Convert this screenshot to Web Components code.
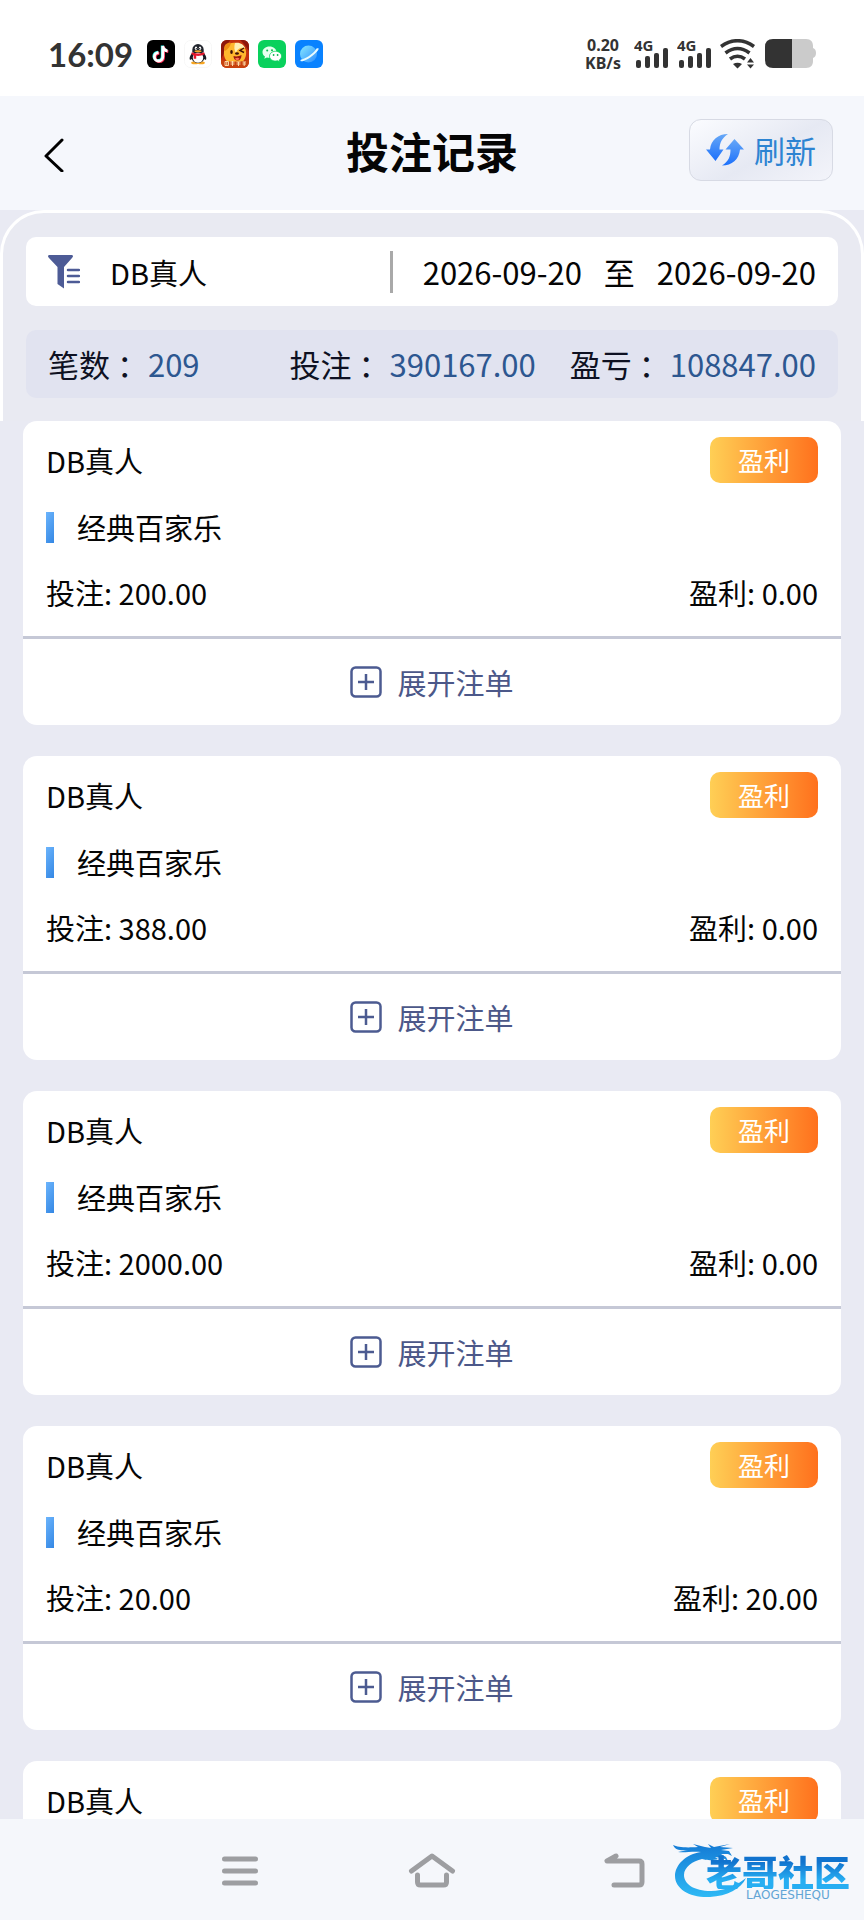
<!DOCTYPE html>
<html lang="zh-CN">
<head>
<meta charset="utf-8">
<meta name="viewport" content="width=device-width, initial-scale=1">
<title>投注记录</title>
<style>
html, body {
  height: 100%;
}
body {
  margin: 0;
  background: #e9eaf3;
  color: #050505;
  font-family: "Noto Sans CJK SC", sans-serif;
  font-size: 29px;
  line-height: 42px;
}
</style>
</head>
<body>

<record-page>
  <status-bar slot="status" time="16:09" speed="0.20"></status-bar>
  <page-header slot="header">投注记录<span slot="action">刷新</span></page-header>
  <filter-panel slot="filter" from="2026-09-20" to="2026-09-20">
    DB真人
    <summary-item slot="summary" label="笔数" class="first">209</summary-item>
    <summary-item slot="summary" label="投注">390167.00</summary-item>
    <summary-item slot="summary" label="盈亏">108847.00</summary-item>
  </filter-panel>
  <bet-card game="经典百家乐" stake="200.00" profit="0.00">DB真人</bet-card>
  <bet-card game="经典百家乐" stake="388.00" profit="0.00">DB真人</bet-card>
  <bet-card game="经典百家乐" stake="2000.00" profit="0.00">DB真人</bet-card>
  <bet-card game="经典百家乐" stake="20.00" profit="20.00">DB真人</bet-card>
  <bet-card>DB真人</bet-card>
  <nav-bar slot="nav"><site-mark></site-mark></nav-bar>
</record-page>

<script>
// shared by every element: box model and a reset for the native buttons
const BASE = `
  :host, * { box-sizing: border-box; }
  svg { display: block; flex: none; }
  button {
    margin: 0;
    padding: 0;
    border: 0;
    background: none;
    color: inherit;
    font: inherit;
    cursor: pointer;
  }
`;

class BaseElement extends HTMLElement {
  constructor() {
    super();
    this._root = this.attachShadow({mode: 'open'});
  }

  connectedCallback() {
    this._root.innerHTML = `<style>${BASE}${this.styles()}</style>${this.markup()}`;
  }
}

class RecordPage extends BaseElement {
  styles() {
    return `
      :host { display: flex; flex-direction: column; height: 100vh; }
      main {
        flex: 1;
        min-height: 0;
        overflow-y: auto;
        scrollbar-width: none;
      }
      .list { display: grid; gap: 31px; padding: 0 23px; }
    `;
  }

  markup() {
    return `
      <slot name="status"></slot>
      <slot name="header"></slot>
      <slot name="filter"></slot>
      <main><div class="list"><slot></slot></div></main>
      <slot name="nav"></slot>
    `;
  }
}

class StatusBar extends BaseElement {
  styles() {
    return `
      :host {
        display: flex;
        flex: none;
        align-items: center;
        justify-content: space-between;
        height: 96px;
        padding: 12px 48px 0;
        background: #fff;
        color: #333;
      }
      .side { display: flex; align-items: center; gap: 9px; }
      .time {
        margin-right: 5px;
        font: bold 33px/40px Lato, sans-serif;
      }
      .speed {
        margin-right: 4px;
        font: bold 16px/18px "Noto Sans", sans-serif;
        text-align: center;
      }
      .speed span { display: block; }
      .signal { margin-top: -6px; }
      .signal text { font: bold 15px "Noto Sans", sans-serif; }
    `;
  }

  signal() {
    return `
      <svg class="signal" width="34" height="36" viewBox="0 -6 34 36" fill="#333">
        <text x="0" y="12">4G</text>
        <rect x="2" y="21" width="5" height="8" rx="2"/>
        <rect x="11" y="17" width="5" height="12" rx="2"/>
        <rect x="20" y="14" width="5" height="15" rx="2"/>
        <rect x="29" y="9" width="5" height="20" rx="2"/>
      </svg>
    `;
  }

  markup() {
    return `
      <div class="side">
        <span class="time">${this.getAttribute('time')}</span>
        <svg width="28" height="28" viewBox="0 0 28 28" fill="none" stroke-width="2.8">
          <rect width="28" height="28" rx="6" fill="#000"/>
          <path d="M15.8 6v10.8a4.2 4.2 0 1 1-4.2-4.2M15.8 6c.3 3 2 4.6 4.7 4.9" stroke="#2af0ea" transform="translate(-.6 -.5)"/>
          <path d="M15.8 6v10.8a4.2 4.2 0 1 1-4.2-4.2M15.8 6c.3 3 2 4.6 4.7 4.9" stroke="#fe2c55" transform="translate(.8 .7)"/>
          <path d="M15.8 6v10.8a4.2 4.2 0 1 1-4.2-4.2M15.8 6c.3 3 2 4.6 4.7 4.9" stroke="#fff"/>
        </svg>
        <svg width="28" height="28" viewBox="0 0 28 28">
          <rect x=".5" y=".5" width="27" height="27" rx="6" fill="#fff" stroke="#f7f7f7"/>
          <ellipse cx="10.800" cy="22.800" rx="3.600" ry="1.500" fill="#f7a623"/>
          <ellipse cx="17.200" cy="22.800" rx="3.600" ry="1.500" fill="#f7a623"/>
          <path d="M8.500 12.500C5.500 16 5.300 18.500 6 19.800c.8.300 1.600-.9 1.600-.9h12.800s.8 1.200 1.600.9c.7-1.300.5-3.800-2.500-7.300z" fill="#191b22"/>
          <ellipse cx="14" cy="17" rx="6.800" ry="6" fill="#191b22"/>
          <ellipse cx="14" cy="17.800" rx="5.200" ry="5" fill="#fff"/>
          <path d="M8.300 12V9.800a5.700 5.700 0 0 1 11.400 0V12z" fill="#20242c"/>
          <ellipse cx="12" cy="8.300" rx="1.200" ry="1.700" fill="#fff"/>
          <ellipse cx="16" cy="8.300" rx="1.200" ry="1.700" fill="#fff"/>
          <circle cx="12.300" cy="8.600" r=".6"/><circle cx="15.700" cy="8.600" r=".6"/>
          <ellipse cx="14" cy="11.300" rx="3.500" ry="1" fill="#f7a623"/>
          <path d="M7.800 12.300c4 1.700 8.400 1.700 12.400 0l.5 2c-3 1.500-6 1.800-8.500 1.500v3H9.700v-3.600l-2.300-.9z" fill="#e6172b"/>
        </svg>
        <svg width="28" height="28" viewBox="0 0 28 28">
          <clipPath id="dog"><rect width="28" height="28" rx="6"/></clipPath>
          <g clip-path="url(#dog)">
            <path d="M0 0h28v28H0z" fill="#c4310f"/>
            <path d="M0 0h9L4 11l-4 8zM19 0h9v11l-5-7z" fill="#8d160c"/>
            <path d="M3 15C2 6 8 2 15 3s11 5 10 12c-1 6-5 9-11 9S4 21 3 15z" fill="#ffb72e"/>
            <path d="M14 3c5-1 9 2 10 5-5-1-8 1-9 5-2-3-2-6-1-10z" fill="#fff0b5"/>
            <path d="M3 9c0-5 4-7 7-6-1 4-3 6-6 8z" fill="#ed8b13"/>
            <ellipse cx="10.500" cy="12" rx="1.300" ry="1.900" fill="#401208"/>
            <path d="M23 8l-4 2.500 4 2" fill="none" stroke="#401208" stroke-width="1.400"/>
            <ellipse cx="16" cy="13.500" rx="1.900" ry="1.200" fill="#401208"/>
            <path d="M12.500 16c3 1 6 0 8-1 0 3.500-1.500 5.500-4 5.500s-4-2-4-4.500z" fill="#9b180c"/>
            <path d="M14 18.500c2-1 3.500-1 4.500.2-1 1.800-3.700 2-4.500-.2z" fill="#ff6d55"/>
            <path d="M0 20c9 2 19 2 28 0v8H0z" fill="#c8430f"/>
            <path d="M4 21.500h3.500v4H4zm1.800 0v4M9.500 22h4M11.500 21v5m-2-2h4M15.500 22h4m-2 0v4m-2-2h4M21.500 22h3.500m-3.500 2h3.500m-1.800-2v4" fill="none" stroke="#ffe4b4" stroke-width=".9"/>
          </g>
        </svg>
        <svg width="28" height="28" viewBox="0 0 28 28">
          <rect width="28" height="28" rx="6" fill="#09d15c"/>
          <path d="M11.500 6.500c-4 0-7 2.500-7 5.700 0 1.800 1 3.300 2.500 4.300l-.7 2.200 2.600-1.300c.8.200 1.700.3 2.600.3 4 0 7-2.400 7-5.500s-3-5.700-7-5.700z" fill="#e6ffee"/>
          <path d="M17.500 11.300c-3.300 0-6 2.200-6 4.900s2.700 4.800 6 4.800c.8 0 1.500-.1 2.200-.3l2.200 1.100-.6-1.900c1.400-.9 2.300-2.200 2.300-3.700 0-2.700-2.800-4.900-6.100-4.900z" fill="#fff" stroke="#09d15c" stroke-width=".8"/>
          <g fill="#09b84f"><circle cx="9.200" cy="10.500" r="1"/><circle cx="14" cy="10.300" r="1"/><circle cx="15.600" cy="15" r=".9"/><circle cx="19.600" cy="15" r=".9"/></g>
        </svg>
        <svg width="28" height="28" viewBox="0 0 28 28">
          <linearGradient id="sea" x2="1" y2="1"><stop stop-color="#88e8ff"/><stop offset="1" stop-color="#2b8cff"/></linearGradient>
          <rect width="28" height="28" rx="6" fill="#0982ff"/>
          <circle cx="13.500" cy="14" r="8.500" fill="url(#sea)"/>
          <path d="M21.500 8.500c2-.8 2.700-.3 1.700 1.400-2.500 3.700-9 8.700-13.700 10.600-3.500 1.500-5 .9-3.500-1 2.500.3 12-5 15.500-11z" fill="#e9fbff"/>
        </svg>
      </div>
      <div class="side">
        <span class="speed"><span>${this.getAttribute('speed')}</span><span>KB/s</span></span>
        ${this.signal()}
        ${this.signal()}
        <svg width="36" height="30" viewBox="0 0 36 30" fill="none" stroke="#333" stroke-width="3.600">
          <path d="M1 7.500Q17.500-4 34 7.500M5.500 14Q17.500 5 29.500 14M10 20Q17.500 14.500 25 20"/>
          <path d="M13 25q4.500-2.500 9 0l-4.500 4.500zM27 23.500l3.500-4.500 3.500 4.500zM27 25.500h7L30.500 29.500z" fill="#333" stroke="none"/>
        </svg>
        <svg width="51" height="30" viewBox="0 0 51 30">
          <path d="M26 0h15c5 0 7 3 7 7v2q3 1 3 5t-3 5v3c0 4-2 7-7 7H26z" fill="#cbcbcb"/>
          <path d="M27 0H8Q0 0 0 8v13q0 8 8 8h19z" fill="#333"/>
        </svg>
      </div>
    `;
  }
}

class PageHeader extends BaseElement {
  styles() {
    return `
      :host {
        display: grid;
        flex: none;
        grid-template-columns: 1fr auto 1fr;
        align-items: center;
        height: 114px;
        padding: 0 31px 6px;
        background: #f5f7fc;
      }
      h1 { margin: 0; font-size: 43px; line-height: 60px; font-weight: bold; }
      .back { width: 44px; height: 44px; padding: 10px 0 0 12px; }
      .refresh {
        display: flex;
        align-items: center;
        justify-self: end;
        gap: 10px;
        height: 62px;
        padding: 0 16px;
        border: 1px solid #d7dae4;
        border-radius: 12px;
        background: linear-gradient(150deg, #fbfcff, #e6e9f3 55%, #f3f4fa);
        color: #2d84d2;
        font-size: 31px;
      }
    `;
  }

  markup() {
    return `
      <button class="back" aria-label="返回">
        <svg width="22" height="34" viewBox="0 0 22 34" fill="none" stroke="#000" stroke-width="3" stroke-linecap="round" stroke-linejoin="round">
          <path d="M19 2 3 18l16 15"/>
        </svg>
      </button>
      <h1><slot></slot></h1>
      <button class="refresh">
        <svg width="38" height="32" viewBox="0 0 38 32">
          <linearGradient id="blue" x2="0" y2="1"><stop stop-color="#67a8f7"/><stop offset="1" stop-color="#1c70fb"/></linearGradient>
          <path d="M22 0C12 0 5 6 4 15.500H0L9.500 27l8-11.500H13.500C13.500 9 16 4 22 0z" fill="url(#blue)"/>
          <path d="M16 31.500c10 0 17-6 18-16h4L28.500 5 19.500 15.500h5c0 7-2 12-8.500 16z" fill="url(#blue)"/>
        </svg>
        <slot name="action"></slot>
      </button>
    `;
  }
}

class FilterPanel extends BaseElement {
  styles() {
    return `
      :host {
        display: grid;
        flex: none;
        gap: 24px;
        padding: 24px 23px 23px;
        border: 3px solid #fff;
        border-bottom: 0;
        border-radius: 44px 44px 0 0;
        background: #e9eaf2;
      }
      .filter, .summary { display: flex; align-items: center; border-radius: 10px; }
      .filter { height: 69px; padding: 0 22px; background: #fff; }
      .type { display: flex; flex: 1; align-items: center; gap: 30px; text-align: left; }
      .divider { width: 3px; height: 42px; margin-right: 30px; background: #a9a9a9; }
      .dates { display: flex; gap: 22px; font-size: 31px; }
      .summary { gap: 34px; height: 68px; padding: 0 22px; background: #e1e3f0; font-size: 31px; }
      ::slotted(.first) { flex: 1; }
    `;
  }

  markup() {
    return `
      <div class="filter">
        <button class="type">
          <svg width="32" height="36" viewBox="0 0 32 36" fill="#4d5b96">
            <path d="M1 1h23q2 1 0 3l-8 9v21.500L9.500 30V13L1 4q-2-2 0-3z"/>
            <path d="M20 16h11M20 22h11M20 28h11" stroke="#4d5b96" stroke-width="2.500" stroke-linecap="round"/>
          </svg>
          <span><slot></slot></span>
        </button>
        <span class="divider"></span>
        <div class="dates">
          <button>${this.getAttribute('from')}</button>
          <span>至</span>
          <button>${this.getAttribute('to')}</button>
        </div>
      </div>
      <div class="summary"><slot name="summary"></slot></div>
    `;
  }
}

class SummaryItem extends BaseElement {
  styles() {
    return `
      :host { display: block; color: #0e1122; white-space: nowrap; }
      .value { color: #2d5790; }
    `;
  }

  markup() {
    return `${this.getAttribute('label')} ：<span class="value"><slot></slot></span>`;
  }
}

class BetCard extends BaseElement {
  styles() {
    return `
      :host { display: block; border-radius: 14px; background: #fff; }
      .content { display: grid; gap: 23px; padding: 16px 23px 23px; }
      .row { display: flex; align-items: center; justify-content: space-between; }
      .badge {
        padding: 0 28px;
        border-radius: 10px;
        background: linear-gradient(90deg, #ffcf55, #ff711d);
        color: #fff;
        font-size: 26px;
        line-height: 46px;
      }
      .game { display: flex; align-items: center; gap: 23px; }
      .game::before {
        content: "";
        width: 8px;
        height: 31px;
        background: linear-gradient(120deg, #6bb4fc, #3487e4);
      }
      .expand {
        display: flex;
        align-items: center;
        justify-content: center;
        gap: 15px;
        width: 100%;
        height: 89px;
        border-top: 3px solid #c5c8d6;
        color: #4c5889;
      }
    `;
  }

  markup() {
    return `
      <div class="content">
        <div class="row"><span><slot></slot></span><span class="badge">盈利</span></div>
        <div class="game">${this.getAttribute('game') || '经典百家乐'}</div>
        <div class="row">
          <span>投注: ${this.getAttribute('stake') || '0.00'}</span>
          <span>盈利: ${this.getAttribute('profit') || '0.00'}</span>
        </div>
      </div>
      <button class="expand">
        <svg width="32" height="32" viewBox="0 0 32 32" fill="none" stroke="#4c5b91" stroke-width="2.500">
          <rect x="1.500" y="1.500" width="29" height="29" rx="4"/>
          <path d="M16 8v16M8 16h16"/>
        </svg>
        展开注单
      </button>
    `;
  }
}

class NavBar extends BaseElement {
  styles() {
    return `
      :host {
        position: relative;
        display: flex;
        flex: none;
        align-items: center;
        justify-content: center;
        gap: 144px;
        height: 101px;
        background: #f5f7fb;
      }
      ::slotted(site-mark) { position: absolute; top: 24px; right: 14px; }
    `;
  }

  markup() {
    const icon = d => `
      <svg width="48" height="40" viewBox="0 0 48 40" fill="none" stroke="#9d9ea1" stroke-width="5" stroke-linecap="round" stroke-linejoin="round">
        <path d="${d}"/>
      </svg>
    `;
    return `
      <button aria-label="最近任务">${icon('M8.500 9h31M8.500 21h31M8.500 33h31')}</button>
      <button aria-label="主屏幕">${icon('M3.500 21 24 6l20.500 15M9.500 25v7q0 3 3 3h23q3 0 3-3v-7')}</button>
      <button aria-label="返回">${icon('M16 6 7 11h32q3 0 3 3v18q0 3-3 3H14')}</button>
      <slot></slot>
    `;
  }
}

class SiteMark extends BaseElement {
  styles() {
    return `
      :host { display: flex; pointer-events: none; }
      svg { margin-right: -40px; }
      .words { padding-top: 10px; }
      .name {
        display: block;
        background: linear-gradient(#1173ce 25%, #27aef2 75%);
        background-clip: text;
        -webkit-background-clip: text;
        color: transparent;
        font-size: 36px;
        font-weight: 900;
        line-height: 36px;
      }
      .latin {
        display: block;
        padding-left: 40px;
        color: #62a5d5;
        font: 12px/12px "DejaVu Sans", sans-serif;
      }
    `;
  }

  markup() {
    return `
      <svg width="74" height="60" viewBox="0 0 74 60">
        <linearGradient id="tail" x2="0" y2="1"><stop stop-color="#147bd5"/><stop offset="1" stop-color="#2eb9f5"/></linearGradient>
        <path d="M29 9C14 11 3 22 3 33c0 13 15 22 35 21 17-1 31-8 36-19-10 8-22 13-35 13-17 0-27-7-27-16 0-8 9-14 18-16 7 2 13 1 16 0l-3-2 8 1 5 3-2-4-5-3h7l4 2-3-5-8-1 12-2-13-1 10-3-16 3-6-3 3 4-6-1-12-3 5 3C12 5 6 4 1 2c2 5 8 6 15 5L6 9c7 1 14-1 23 0z" fill="url(#tail)"/>
      </svg>
      <div class="words">
        <span class="name">老哥社区</span>
        <span class="latin">LAOGESHEQU</span>
      </div>
    `;
  }
}

window.customElements.define('record-page', RecordPage);
window.customElements.define('status-bar', StatusBar);
window.customElements.define('page-header', PageHeader);
window.customElements.define('filter-panel', FilterPanel);
window.customElements.define('summary-item', SummaryItem);
window.customElements.define('bet-card', BetCard);
window.customElements.define('nav-bar', NavBar);
window.customElements.define('site-mark', SiteMark);
</script>
</body>
</html>
